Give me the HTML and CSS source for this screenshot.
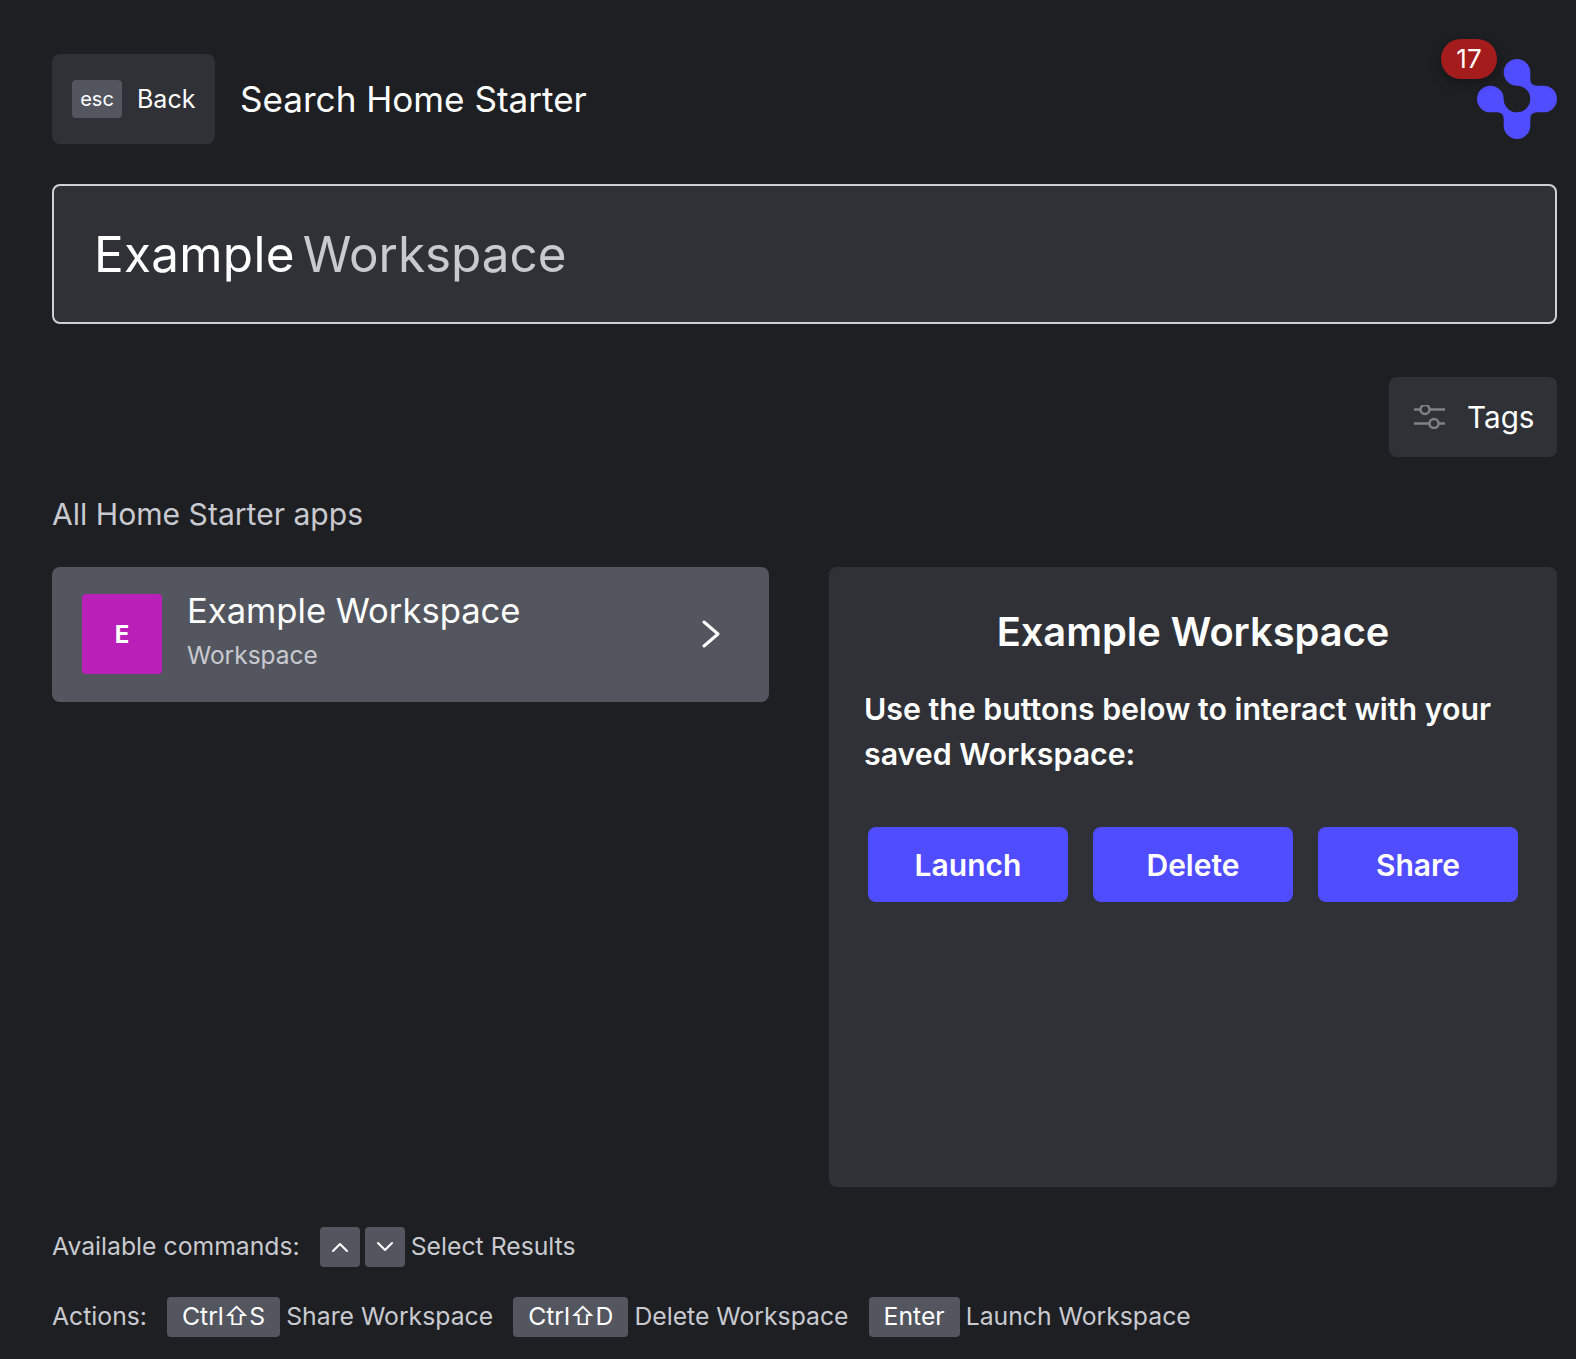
FILE: index.html
```html
<!DOCTYPE html>
<html lang="en">
<head>
  <meta charset="UTF-8">
  <title>Search Home Starter</title>
  <link rel="stylesheet" href="styles.css">
</head>
<body>
  <div class="page">
    <header class="top-bar">
      <button class="back-button"><span class="esc-key">esc</span><span class="back-label">Back</span></button>
      <h1 class="page-title">Search Home Starter</h1>
      <div class="logo-wrap">
        <span class="badge">17</span>
        <svg class="logo" viewBox="0 0 80 80" width="80" height="80">
          <path fill="#504cff" d="M40 0A13.3 13.3 0 0 1 53.3 13.3V20Q53.3 26.7 60 26.7H66.7A13.3 13.3 0 0 1 66.7 53.3H60Q53.3 53.3 53.3 60V66.7A13.3 13.3 0 0 1 26.7 66.7V60Q26.7 53.3 20 53.3H13.3A13.3 13.3 0 0 1 13.3 26.7A13.3 13.3 0 0 1 26.7 40A13.3 13.3 0 0 0 53.3 40A13.3 13.3 0 0 0 40 26.7A13.3 13.3 0 0 1 40 0Z"/>
        </svg>
      </div>
    </header>

    <div class="search-box">
      <span class="typed">Example</span> <span class="hint">Workspace</span>
    </div>

    <div class="filter-row">
      <button class="tags-button">
        <svg class="tags-icon" viewBox="0 0 32 24" width="32" height="24" fill="none" stroke="#808188" stroke-width="2.5">
          <path d="M0 4.5H6.5M15.5 4.5H31M0 18.5H15.5M24.5 18.5H31"/>
          <circle cx="11" cy="4.5" r="4.5"/>
          <circle cx="20" cy="18.5" r="4.5"/>
        </svg>
        Tags
      </button>
    </div>

    <h2 class="section-title">All Home Starter apps</h2>

    <div class="results">
      <div class="result-list">
        <div class="result-item">
          <div class="app-icon">E</div>
          <div class="app-text">
            <div class="app-name">Example Workspace</div>
            <div class="app-type">Workspace</div>
          </div>
          <svg class="chevron" viewBox="0 0 18 28" width="18" height="28" fill="none" stroke="#fff" stroke-width="3" stroke-linecap="round" stroke-linejoin="round">
            <path d="M2 2L16 14L2 26"/>
          </svg>
        </div>
      </div>

      <div class="detail-panel">
        <h3 class="detail-title">Example Workspace</h3>
        <p class="detail-text">Use the buttons below to interact with your saved Workspace:</p>
        <div class="detail-buttons">
          <button class="action-button">Launch</button>
          <button class="action-button">Delete</button>
          <button class="action-button">Share</button>
        </div>
      </div>
    </div>

    <footer class="commands">
      <div class="command-row">
        <span class="row-label">Available commands:</span>
        <span class="key-group">
          <span class="key key-arrow">
            <svg viewBox="0 0 18 10" width="18" height="10" fill="none" stroke="#fff" stroke-width="2" stroke-linecap="round" stroke-linejoin="round"><path d="M2 9L9 2L16 9"/></svg>
          </span>
          <span class="key key-arrow">
            <svg viewBox="0 0 18 10" width="18" height="10" fill="none" stroke="#fff" stroke-width="2" stroke-linecap="round" stroke-linejoin="round"><path d="M2 1L9 8L16 1"/></svg>
          </span>
        </span>
        <span class="command-name">Select Results</span>
      </div>
      <div class="command-row">
        <span class="row-label">Actions:</span>
        <span class="command"><span class="key">Ctrl⇧S</span><span class="command-name">Share Workspace</span></span>
        <span class="command"><span class="key">Ctrl⇧D</span><span class="command-name">Delete Workspace</span></span>
        <span class="command"><span class="key">Enter</span><span class="command-name">Launch Workspace</span></span>
      </div>
    </footer>
  </div>
</body>
</html>
```
FILE: styles.css
```css
body {
  margin: 0;
  background: #1e1f23;
  color: #fff;
  font-family: Inter, "Noto Sans", sans-serif;
}
button {
  font-family: inherit;
  border: none;
  color: #fff;
}
.page {
  padding: 54px 19px 0 52px;
  height: 1359px;
  box-sizing: border-box;
  overflow: hidden;
}

/* Top bar */
.top-bar {
  display: flex;
  align-items: center;
  height: 90px;
}
.back-button {
  display: flex;
  align-items: center;
  width: 163px;
  height: 90px;
  padding: 0 0 0 20px;
  background: #2f3136;
  border-radius: 8px;
  font-size: 25px;
}
.esc-key {
  display: flex;
  align-items: center;
  justify-content: center;
  width: 50px;
  height: 38px;
  margin-right: 15px;
  background: #53565f;
  border-radius: 4px;
  font-size: 20px;
}
.page-title {
  margin: 0 0 0 25px;
  font-size: 35.1px;
  font-weight: 400;
}
.logo-wrap {
  position: relative;
  margin-left: auto;
  width: 80px;
  height: 80px;
}
.logo {
  display: block;
}
.badge {
  position: absolute;
  left: -36px;
  top: -20px;
  width: 56px;
  height: 40px;
  line-height: 40px;
  text-align: center;
  background: #a51c1c;
  border-radius: 20px;
  font-size: 26px;
  box-shadow: 0 4px 12px rgba(0,0,0,0.3);
}

/* Search */
.search-box {
  display: flex;
  align-items: center;
  gap: 8px;
  height: 140px;
  margin-top: 40px;
  padding-left: 40px;
  box-sizing: border-box;
  background: #2f3136;
  border: 2px solid #cfd0d4;
  border-radius: 8px;
  font-size: 49.4px;
}
.typed {
  letter-spacing: 0.3px;
}
.hint {
  color: #c9cad0;
}

.filter-row {
  display: flex;
  justify-content: flex-end;
  margin-top: 53px;
}
.tags-button {
  display: flex;
  align-items: center;
  gap: 21px;
  width: 168px;
  height: 80px;
  padding: 0 0 0 25px;
  background: #2f3136;
  border-radius: 8px;
  font-size: 29.7px;
}
.section-title {
  margin: 39px 0 0;
  height: 36px;
  line-height: 36px;
  font-size: 30.1px;
  font-weight: 400;
  color: #c9cad0;
}

/* Results */
.results {
  display: flex;
  gap: 60px;
  margin-top: 35px;
}
.result-list {
  width: 717px;
}
.result-item {
  display: flex;
  align-items: center;
  height: 135px;
  padding: 0 49px 0 30px;
  background: #53565f;
  border-radius: 8px;
}
.app-icon {
  display: flex;
  align-items: center;
  justify-content: center;
  width: 80px;
  height: 80px;
  margin-bottom: 1px;
  background: #b820b8;
  border-radius: 4px;
  font-size: 24px;
  font-weight: 700;
}
.app-text {
  flex: 1;
  margin-left: 25px;
  margin-bottom: 9px;
}
.app-name {
  font-size: 34.6px;
  line-height: 42px;
}
.app-type {
  margin-top: 8px;
  font-size: 24.5px;
  line-height: 32px;
  color: #c9cad0;
}
.chevron {
  display: block;
  margin-bottom: 2px;
}
.detail-panel {
  flex: 1;
  height: 620px;
  padding: 0 35px;
  background: #2f3136;
  border-radius: 8px;
}
.detail-title {
  margin: 41px 0 0;
  text-align: center;
  font-size: 39.8px;
  line-height: 48px;
  font-weight: 600;
}
.detail-text {
  margin: 31px 0 0;
  font-size: 30.3px;
  line-height: 45px;
  font-weight: 600;
}
.detail-buttons {
  display: flex;
  gap: 25px;
  margin: 50px 0 0 4px;
}
.action-button {
  flex: none;
  width: 200px;
  height: 75px;
  background: #504cff;
  border-radius: 8px;
  font-size: 30px;
  font-weight: 600;
}

/* Bottom commands */
.commands {
  margin-top: 40px;
}
.command-row {
  display: flex;
  align-items: center;
  height: 40px;
  margin-bottom: 30px;
  font-size: 24.75px;
  color: #c9cad0;
}
.row-label {
  margin-right: 20px;
  padding-bottom: 2px;
}
.key-group {
  display: flex;
  gap: 5px;
}
.key {
  display: inline-flex;
  align-items: center;
  justify-content: center;
  height: 40px;
  padding: 0 15px 2px;
  box-sizing: border-box;
  background: #53565f;
  border-radius: 4px;
  color: #fff;
}
.key-arrow {
  width: 40px;
  padding: 0;
}
.command {
  display: flex;
  align-items: center;
  margin-right: 20px;
}
.command-name {
  margin-left: 6px;
  padding-bottom: 2px;
}
```
